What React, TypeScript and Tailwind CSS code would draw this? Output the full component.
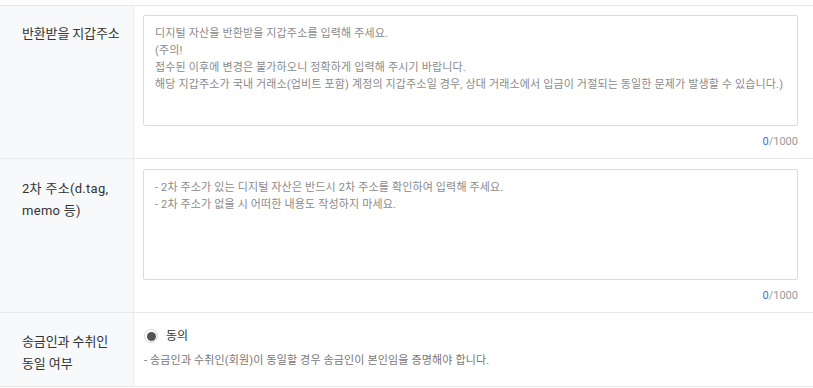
import React from 'react'

const font = { fontFamily: 'Roboto, "Noto Sans CJK KR", sans-serif' }

function Counter() {
  return (
    <div className="mt-[9px] text-right text-[11px] leading-[14px] text-[#999]">
      <span className="text-[#3d6fd8]">0</span>/1000
    </div>
  )
}

function Field({ placeholder }: { placeholder: string }) {
  return (
    <textarea
      readOnly
      placeholder={placeholder}
      className="block w-full h-[111px] resize-none rounded-[2px] border border-[#dcdcdc] bg-white px-[11px] py-[9px] text-[11px] leading-[17px] tracking-[0.15px] text-[#666] placeholder:text-[#8a8a8a] outline-none"
      style={font}
    />
  )
}

export default function App() {
  return (
    <div className="w-[813px] h-[388px] overflow-hidden bg-white pt-[5px]" style={font}>
      <div className="border-t border-[#e8e8e8]">
        {/* wallet address */}
        <div className="flex border-b border-[#e8e8e8]">
          <div className="w-[134px] shrink-0 border-r border-[#ececec] bg-[#f8f9fb] pl-[22px] pt-[17px] text-[13px] leading-[22px] tracking-[-0.15px] text-[#333]">
            반환받을 지갑주소
          </div>
          <div className="flex-1 pl-[9px] pr-[15px] pt-[9px] pb-[9px]">
            <Field
              placeholder={
                '디지털 자산을 반환받을 지갑주소를 입력해 주세요.\n(주의!\n접수된 이후에 변경은 불가하오니 정확하게 입력해 주시기 바랍니다.\n해당 지갑주소가 국내 거래소(업비트 포함) 계정의 지갑주소일 경우, 상대 거래소에서 입금이 거절되는 동일한 문제가 발생할 수 있습니다.)'
              }
            />
            <Counter />
          </div>
        </div>

        {/* secondary address */}
        <div className="flex border-b border-[#e8e8e8]">
          <div className="w-[134px] shrink-0 border-r border-[#ececec] bg-[#f8f9fb] pl-[22px] pr-2 pt-[19px] text-[13px] leading-[22px] tracking-[0.3px] text-[#333]">
            2차 주소(d.tag,
            <br />
            memo 등)
          </div>
          <div className="flex-1 pl-[9px] pr-[15px] pt-[10px] pb-[9px]">
            <Field
              placeholder={
                '- 2차 주소가 있는 디지털 자산은 반드시 2차 주소를 확인하여 입력해 주세요.\n- 2차 주소가 없을 시 어떠한 내용도 작성하지 마세요.'
              }
            />
            <Counter />
          </div>
        </div>

        {/* same person */}
        <div className="flex border-b border-[#e8e8e8]">
          <div className="w-[134px] shrink-0 border-r border-[#ececec] bg-[#f8f9fb] pl-[22px] pt-[18px] pb-[11px] text-[13px] leading-[22px] tracking-[-0.1px] text-[#333]">
            송금인과 수취인
            <br />
            동일 여부
          </div>
          <div className="flex-1 pl-[10px] pt-[15px]">
            <label className="flex items-center gap-[8px]">
              <span className="flex h-[14px] w-[14px] items-center justify-center rounded-full border border-[#d6d6d6] bg-white">
                <span className="h-[9px] w-[9px] rounded-full bg-[#555]" />
              </span>
              <span className="text-[12px] leading-[16px] text-[#333]">동의</span>
            </label>
            <p className="mt-[10px] text-[11px] leading-[14px] tracking-[0.15px] text-[#777]">
              - 송금인과 수취인(회원)이 동일할 경우 송금인이 본인임을 증명해야 합니다.
            </p>
          </div>
        </div>
      </div>
    </div>
  )
}
